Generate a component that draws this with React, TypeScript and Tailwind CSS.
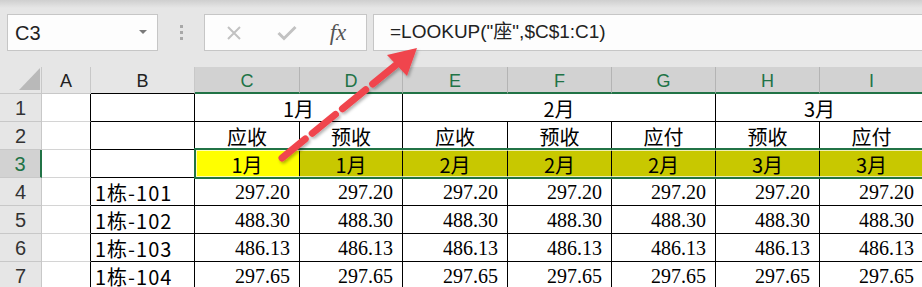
import React from 'react';

const sans = { fontFamily: '"Liberation Sans", "Noto Sans CJK SC", sans-serif' };
const serifFont = { fontFamily: '"Liberation Serif", "Times New Roman", serif', fontSize: '20px' };
const cjkFont = { fontFamily: '"Noto Sans CJK SC", sans-serif' };

const heads = ['C', 'D', 'E', 'F', 'G', 'H', 'I'];
const widths = ['w-[105px]', 'w-[103px]', 'w-[105px]', 'w-[104px]', 'w-[104px]', 'w-[104px]', 'w-[104px]'];
const row2 = ['应收', '预收', '应收', '预收', '应付', '预收', '应付'];
const row3 = ['1月', '1月', '2月', '2月', '2月', '3月', '3月'];
const rows = [
  ['1栋-101', '297.20'],
  ['1栋-102', '488.30'],
  ['1栋-103', '486.13'],
  ['1栋-104', '297.65'],
];

const RowHead: React.FC<{ n: number; active?: boolean }> = ({ n, active }) => (
  <div
    className={`flex items-end justify-center pb-[3px] border-b border-[#c8c8c8] text-[20px] leading-none ${
      active ? 'bg-[#d2d2d2] text-[#217346] border-r-2 border-r-[#217346]' : 'bg-[#e6e6e6] text-[#333] border-r border-r-[#c8c8c8]'
    }`}
  >
    {n}
  </div>
);

const cjk = 'text-[20px] leading-none text-black';

const App: React.FC = () => {
  return (
    <div className="relative w-[922px] h-[287px] overflow-hidden bg-[#e6e6e6]" style={sans}>
      {/* formula bar */}
      <div className="h-[8px] bg-gradient-to-b from-[#cfcfcf] to-[#e6e6e6]" />
      <div className="flex items-stretch h-[37px] mt-[6px] pl-[7px]">
        <div className="w-[151px] flex items-center justify-between bg-[#fdfdfd] border border-[#c6c6c6] pl-[7px] pr-[10px] text-[20px] text-[#222]">
          <span>C3</span>
          <svg width="8" height="5" viewBox="0 0 8 5"><path d="M0 0h8L4 4z" fill="#7a7a7a" /></svg>
        </div>
        <div className="w-[46px] flex flex-col items-center justify-center gap-[3px]">
          <div className="w-[3px] h-[3px] bg-[#a8a8a8]" />
          <div className="w-[3px] h-[3px] bg-[#a8a8a8]" />
          <div className="w-[3px] h-[3px] bg-[#a8a8a8]" />
        </div>
        <div className="w-[163px] flex items-center bg-[#fdfdfd] border border-[#c6c6c6]">
          <div className="w-[55px] flex justify-center pl-[2px]">
            <svg width="16" height="16" viewBox="0 0 16 16">
              <path d="M2 2L14 14M14 2L2 14" stroke="#c2c2c2" strokeWidth="2" />
            </svg>
          </div>
          <div className="w-[54px] flex justify-center">
            <svg width="20" height="16" viewBox="0 0 20 16">
              <path d="M1.5 8L7 13.5L18.5 2" stroke="#c2c2c2" strokeWidth="3" fill="none" />
            </svg>
          </div>
          <div className="flex-1 flex justify-center pr-[4px] italic text-[#555] leading-none" style={{ ...serifFont, fontSize: '23px' }}>
            fx
          </div>
        </div>
        <div className="flex-1 ml-[6px] flex items-center bg-[#fdfdfd] border border-[#c6c6c6] border-r-0 pl-[16px] text-[19px] text-[#222]">
          =LOOKUP("座",$C$1:C1)
        </div>
      </div>

      {/* sheet */}
      <div className="mt-[16px] grid grid-cols-[42px_49px_104px_105px_103px_105px_104px_104px_104px_104px] grid-rows-[27px_28px_28px_28px_28px_28px_28px_28px] bg-white">
        {/* column headers */}
        <div className="relative bg-[#e6e6e6] border-r border-b border-[#c8c8c8]">
          <svg className="absolute left-[19px] top-[1px]" width="21" height="23" viewBox="0 0 21 23">
            <path d="M21 0V22H0z" fill="#b9b9b9" />
          </svg>
        </div>
        <div className="flex items-end justify-center pb-[3px] bg-[#e6e6e6] border-r border-b border-[#c8c8c8] text-[18px] leading-none text-[#222]">A</div>
        <div className="flex items-end justify-center pb-[3px] bg-[#e6e6e6] border-r border-r-[#c8c8c8] border-b border-b-black text-[18px] leading-none text-[#222]">B</div>
        {heads.map((h) => (
          <div
            key={h}
            className="flex items-end justify-center pb-[2px] bg-[#d2d2d2] border-r border-r-[#b4b4b4] border-b-2 border-b-[#217346] text-[18px] leading-none text-[#217346]"
          >
            {h}
          </div>
        ))}

        {/* row 1 */}
        <RowHead n={1} />
        <div className="border-r border-r-black border-b border-b-[#d4d4d4]" />
        <div className="border-r border-b border-black" />
        <div className={`col-span-2 flex items-end justify-center pb-[2px] border-r border-b border-black ${cjk}`} style={cjkFont}>1月</div>
        <div className={`col-span-3 flex items-end justify-center pb-[2px] border-r border-b border-black ${cjk}`} style={cjkFont}>2月</div>
        <div className={`col-span-2 flex items-end justify-center pb-[2px] border-r border-b border-black ${cjk}`} style={cjkFont}>3月</div>

        {/* row 2 */}
        <RowHead n={2} />
        <div className="border-r border-r-black border-b border-b-[#d4d4d4]" />
        <div className="border-r border-b border-black" />
        {row2.map((t, i) => (
          <div key={i} className={`flex items-end justify-center pb-[2px] border-r border-b border-black ${cjk}`} style={cjkFont}>
            {t}
          </div>
        ))}

        {/* row 3 (selected C3:I3) */}
        <RowHead n={3} active />
        <div className="border-r border-r-black border-b border-b-[#d4d4d4]" />
        <div className="border-r border-b border-black" />
        <div className="col-span-7 relative flex">
          {row3.map((t, i) => (
            <div
              key={i}
              style={cjkFont}
              className={`shrink-0 ${widths[i]} flex items-end justify-center pb-[2px] border-r border-b border-black ${cjk} ${
                i === 0 ? 'bg-[#ffff00]' : 'bg-[#c8c800]'
              }`}
            >
              {t}
            </div>
          ))}
          <div className="absolute -top-[2px] -left-[1px] -bottom-[1px] -right-[2px] border-2 border-[#217346] pointer-events-none">
            <div className="h-full border border-white/70" />
          </div>
        </div>

        {/* data rows */}
        {rows.map(([label, val], r) => (
          <React.Fragment key={label}>
            <RowHead n={r + 4} />
            <div className="border-r border-r-black border-b border-b-[#d4d4d4]" />
            <div className={`flex items-end pl-[4px] pb-[2px] border-r border-b border-black tracking-[1px] ${cjk}`} style={cjkFont}>
              {label}
            </div>
            {heads.map((h) => (
              <div
                key={h}
                style={serifFont}
                className="flex items-end justify-end pr-[9px] pb-[3px] border-r border-b border-black leading-none text-black"
              >
                {val}
              </div>
            ))}
          </React.Fragment>
        ))}
      </div>

      {/* red dashed arrow */}
      <svg className="absolute left-0 top-0 pointer-events-none" width="922" height="287" viewBox="0 0 922 287">
        <defs>
          <filter id="sh" x="-20%" y="-20%" width="140%" height="140%">
            <feDropShadow dx="1.5" dy="2" stdDeviation="1.5" floodColor="#000" floodOpacity="0.3" />
          </filter>
        </defs>
        <g filter="url(#sh)">
          <path d="M282 158L396 65" stroke="#f0454d" strokeWidth="7" strokeDasharray="30 9" strokeLinecap="round" />
          <path d="M417 48L387 55L407 76z" fill="#f0454d" />
        </g>
      </svg>
    </div>
  );
};

export default App;
